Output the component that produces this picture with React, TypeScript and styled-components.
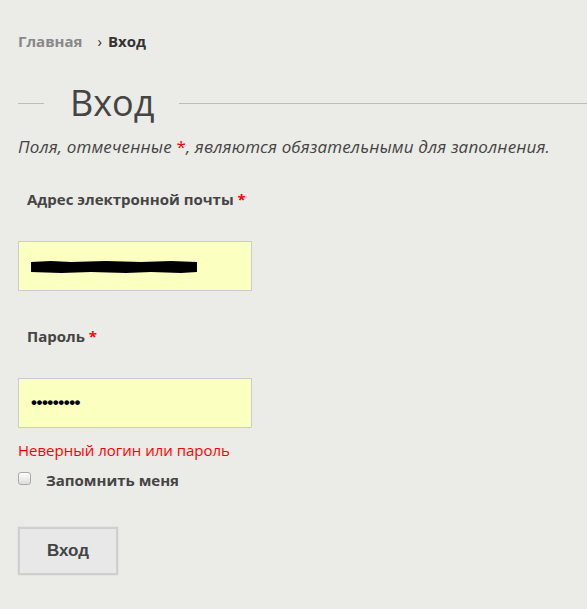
import React from "react";
import styled, { createGlobalStyle } from "styled-components";

const GlobalStyle = createGlobalStyle`
  html, body {
    margin: 0;
    padding: 0;
    background: #ebebe7;
  }
  body {
    font-family: "Open Sans", "Liberation Sans", sans-serif;
    color: #444;
  }
`;

const App: React.FC = () => {
  return (
    <Page>
      <GlobalStyle />
      <Breadcrumbs>
        <Crumb>Главная</Crumb>
        <Current>
          <Sep>›</Sep>Вход
        </Current>
      </Breadcrumbs>
      <TitleRow>
        <Rule $w="26px" />
        <Title>Вход</Title>
        <Rule />
      </TitleRow>
      <Note>
        Поля, отмеченные <Star>*</Star>, являются обязательными для заполнения.
      </Note>
      <Field>
        <Label>
          Адрес электронной почты <Star>*</Star>
        </Label>
        <InputBox>
          <Scribble viewBox="0 0 166 12" preserveAspectRatio="none">
            <path
              d="M0 1 L20 0 L40 1 L75 0 L110 1 L140 0 L166 1 L166 11 L150 12 L120 11 L95 12 L60 11 L30 12 L0 11 Z"
              fill="#000"
            />
          </Scribble>
        </InputBox>
      </Field>
      <Field>
        <Label>
          Пароль <Star>*</Star>
        </Label>
        <InputBox>
          <Dots>•••••••••</Dots>
        </InputBox>
      </Field>
      <Error>Неверный логин или пароль</Error>
      <Remember>
        <Check />
        <RememberText>Запомнить меня</RememberText>
      </Remember>
      <Submit>Вход</Submit>
    </Page>
  );
};

const Page = styled.div`
  width: 587px;
  height: 609px;
  padding: 31px 0 0 18px;
  box-sizing: border-box;
  overflow: hidden;
`;

const Breadcrumbs = styled.div`
  display: flex;
  align-items: baseline;
  font-size: 15px;
  font-weight: 700;
  gap: 15px;
  line-height: 20px;
`;

const Crumb = styled.span`
  color: #888;
`;

const Current = styled.span`
  color: #333;
`;

const Sep = styled.span`
  font-weight: 400;
  margin-right: 6px;
`;

const TitleRow = styled.div`
  display: flex;
  align-items: center;
  margin: 30px 0 0 -18px;
  padding-left: 18px;
`;

const Rule = styled.div<{ $w?: string }>`
  height: 1px;
  background: #bcbcb8;
  ${(p) => (p.$w ? `width: ${p.$w};` : "flex: 1;")}
`;

const Title = styled.h1`
  margin: 0 25px 0 26px;
  font-size: 36px;
  font-weight: 400;
  line-height: 44px;
  color: #444;
`;

const Note = styled.p`
  margin: 10px 0 0;
  font-size: 17px;
  font-style: italic;
  line-height: 24px;
  letter-spacing: 0.15px;
  color: #444;
  white-space: nowrap;
`;

const Star = styled.span`
  color: #f00;
  font-style: normal;
`;

const Field = styled.div`
  display: flex;
  flex-direction: column;
  margin-top: 30px;
  & + & {
    margin-top: 35px;
  }
`;

const Label = styled.label`
  font-size: 15px;
  font-weight: 700;
  line-height: 20px;
  color: #444;
  padding-left: 9px;
  margin-bottom: 32px;
`;

const InputBox = styled.div`
  position: relative;
  width: 234px;
  height: 50px;
  box-sizing: border-box;
  border: 1px solid #ccc;
  background: #fbffc0;
  display: flex;
  align-items: center;
  padding-left: 12px;
`;

const Scribble = styled.svg`
  width: 166px;
  height: 12px;
  margin-top: 2px;
`;

const Dots = styled.span`
  font-family: "Liberation Sans", sans-serif;
  font-size: 17px;
  font-weight: 700;
  color: #000;
  letter-spacing: -0.5px;
`;

const Error = styled.div`
  margin-top: 12px;
  font-size: 15px;
  line-height: 20px;
  color: #f00;
`;

const Remember = styled.label`
  display: flex;
  align-items: center;
  gap: 15px;
  margin-top: 7px;
`;

const Check = styled.span`
  width: 11px;
  height: 11px;
  border: 1px solid #aaa;
  border-radius: 3px;
  background: linear-gradient(#fff, #ddd);
`;

const RememberText = styled.span`
  font-size: 15px;
  font-weight: 700;
  color: #444;
  margin-top: 3px;
`;

const Submit = styled.button`
  display: block;
  margin-top: 37px;
  width: 100px;
  height: 48px;
  background: #e8e8e8;
  border: 2px solid #cfcfcf;
  box-shadow: 0 0 1px #bbb;
  font-family: "Liberation Sans", Arial, sans-serif;
  font-size: 17px;
  font-weight: 700;
  color: #444;
`;

export default App;
